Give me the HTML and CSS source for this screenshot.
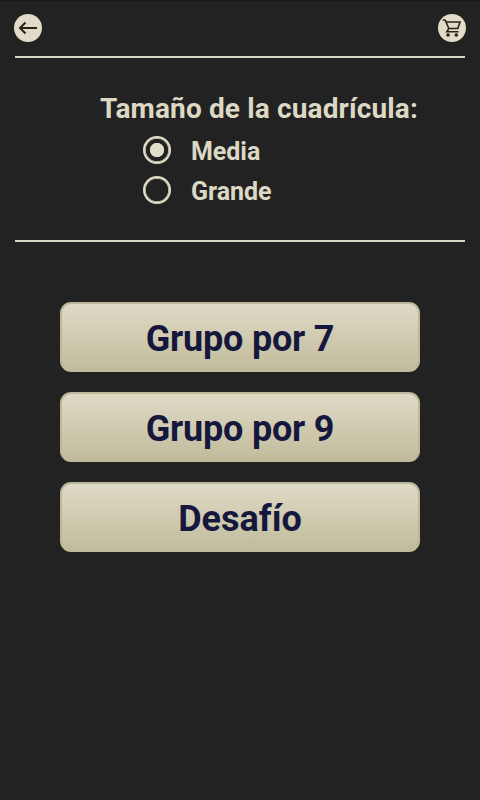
FILE: index.html
```html
<!DOCTYPE html>
<html lang="es">
<head>
    <meta charset="UTF-8">
    <meta name="viewport" content="width=device-width, initial-scale=1.0">
    <title>Tamaño de la cuadrícula</title>
    <link rel="stylesheet" href="styles.css">
</head>
<body>
    <div class="topbar">
        <button class="icon-button" aria-label="Atrás">
            <svg viewBox="0 0 28 28" width="28" height="28">
                <path d="M23 14H6M11.5 8.5L6 14l5.5 5.5" fill="none" stroke="#2a2219" stroke-width="2"/>
            </svg>
        </button>
        <button class="icon-button" aria-label="Tienda">
            <svg viewBox="0 0 28 28" width="28" height="28">
                <path d="M4.8 5.8L7.4 6.5L10.8 14.5H19.8L22 8H8.2M10.8 14.5L8.8 17.8H20.5" fill="none" stroke="#2a2219" stroke-width="1.6"/>
                <circle cx="10" cy="21" r="1.8" fill="#2a2219"/>
                <circle cx="18.3" cy="21" r="1.8" fill="#2a2219"/>
            </svg>
        </button>
    </div>

    <div class="options">
        <h1>Tamaño de la cuadrícula:</h1>
        <label class="option">
            <input type="radio" name="size" checked>
            <span>Media</span>
        </label>
        <label class="option">
            <input type="radio" name="size">
            <span>Grande</span>
        </label>
    </div>

    <div class="menu">
        <button class="button narrow">Grupo por 7</button>
        <button class="button narrow">Grupo por 9</button>
        <button class="button">Desafío</button>
    </div>
</body>
</html>
```
FILE: styles.css
```css
* {
    box-sizing: border-box;
}
body {
    margin: 0;
    padding: 0 15px;
    min-height: 100vh;
    background: #222222;
    border-top: 1px solid #1b1b1b;
    color: #dcd8c4;
    font-family: Roboto, sans-serif;
    font-weight: bold;
}
.topbar {
    display: flex;
    justify-content: space-between;
    height: 57px;
    margin: 0 -1px;
    padding-top: 13px;
}
.icon-button {
    width: 28px;
    height: 28px;
    padding: 0;
    border: none;
    border-radius: 50%;
    background: #e1dcc7;
    cursor: pointer;
}
.icon-button svg {
    display: block;
}
.options {
    height: 186px;
    margin-top: -2px;
    padding: 35px 0 0 85px;
    border-top: 2px solid #dbd7c6;
    border-bottom: 2px solid #dbd7c6;
}
h1 {
    margin: 0 0 6px;
    font-size: 28px;
    line-height: 32px;
    letter-spacing: 0.14px;
    white-space: nowrap;
}
.option {
    display: flex;
    align-items: center;
    gap: 20px;
    height: 40px;
    padding-left: 43px;
    font-size: 25px;
    letter-spacing: -0.05px;
    cursor: pointer;
}
.option input {
    appearance: none;
    width: 28px;
    height: 28px;
    margin: 0 0 2px;
    border: 2px solid #e1ddc8;
    border-radius: 50%;
    box-shadow: inset 0 0 0 0.7px #e1ddc8;
}
.option input:checked {
    background: radial-gradient(circle, #e1ddc8 6.8px, transparent 7.5px);
}
.menu {
    display: flex;
    flex-direction: column;
    gap: 20px;
    padding: 60px 45px 0;
}
.button {
    height: 70px;
    padding: 4px 0 0;
    border: 2px solid #bdb899;
    border-bottom-color: #c0bb9b;
    border-radius: 11px;
    background: linear-gradient(#dfdac5, #c1bc9c);
    color: #15173d;
    font: inherit;
    font-size: 36px;
    cursor: pointer;
}
.narrow {
    letter-spacing: -0.2px;
}
```
